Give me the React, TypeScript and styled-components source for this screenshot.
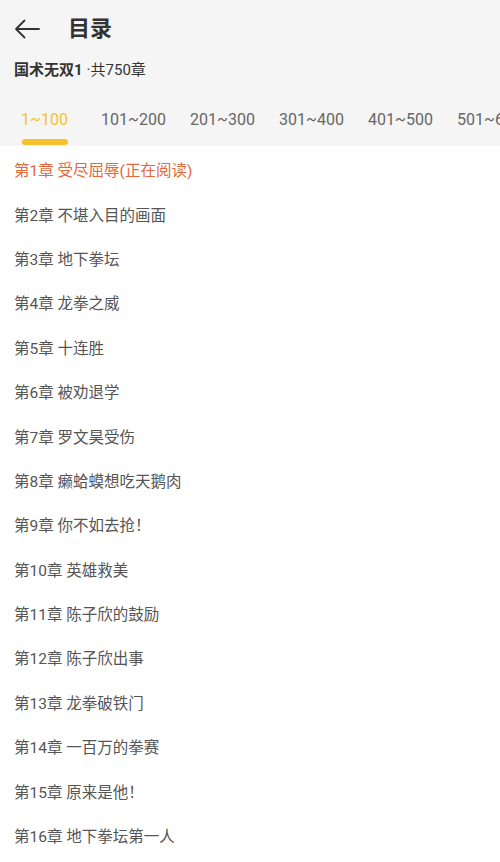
import React from "react";
import styled, { createGlobalStyle } from "styled-components";

const GlobalStyle = createGlobalStyle`
  body {
    margin: 0;
    background: #ffffff;
    font-family: Roboto, "Noto Sans CJK SC", sans-serif;
    -webkit-font-smoothing: antialiased;
  }
`;

const Page = styled.div`
  width: 500px;
  height: 862px;
  overflow: hidden;
  background: #ffffff;
`;

const Header = styled.div`
  background: #f5f5f5;
  display: flex;
  flex-direction: column;
`;

const TopBar = styled.div`
  height: 57px;
  display: flex;
  align-items: center;
  padding: 0 0 0 14px;
  box-sizing: border-box;
`;

const BackButton = styled.div`
  width: 26px;
  height: 24px;
  display: flex;
  align-items: center;
  justify-content: center;
  margin-right: 28px;
`;

const Title = styled.h1`
  margin: 0;
  font-size: 22px;
  font-weight: 700;
  color: #333333;
  line-height: 1;
`;

const BookInfo = styled.div`
  padding: 0 14px;
  height: 22px;
  display: flex;
  align-items: center;
  font-size: 15px;
  color: #333333;
`;

const BookName = styled.span`
  font-weight: 700;
  margin-right: 4px;
`;

const Tabs = styled.div`
  display: flex;
  margin-top: 18px;
  white-space: nowrap;
`;

const Tab = styled.div<{ $active?: boolean }>`
  flex: 0 0 89px;
  height: 49px;
  display: flex;
  flex-direction: column;
  align-items: center;
  justify-content: space-between;
  font-size: 16px;
  color: ${(p) => (p.$active ? "#f5c22d" : "#666666")};
`;

const TabLabel = styled.span`
  line-height: 22px;
  padding-top: 12px;
`;

const Indicator = styled.div<{ $active?: boolean }>`
  width: 46px;
  height: 6px;
  border-radius: 3px;
  margin-bottom: 1px;
  background: ${(p) => (p.$active ? "#f6c22b" : "transparent")};
`;

const ChapterList = styled.ul`
  list-style: none;
  margin: 0;
  padding: 1px 0 0;
`;

const Chapter = styled.li<{ $current?: boolean }>`
  height: 44.4px;
  display: flex;
  align-items: center;
  padding: 0 14px;
  font-size: 15.5px;
  color: ${(p) => (p.$current ? "#e6673a" : "#555555")};
  white-space: nowrap;
`;

const tabs = ["1~100", "101~200", "201~300", "301~400", "401~500", "501~600"];

const chapters = [
  "受尽屈辱(正在阅读)",
  "不堪入目的画面",
  "地下拳坛",
  "龙拳之威",
  "十连胜",
  "被劝退学",
  "罗文昊受伤",
  "癞蛤蟆想吃天鹅肉",
  "你不如去抢！",
  "英雄救美",
  "陈子欣的鼓励",
  "陈子欣出事",
  "龙拳破铁门",
  "一百万的拳赛",
  "原来是他！",
  "地下拳坛第一人",
];

export default function App() {
  return (
    <Page>
      <GlobalStyle />
      <Header>
        <TopBar>
          <BackButton>
            <svg width="26" height="20" viewBox="0 0 26 20" fill="none">
              <path
                d="M25 10H2M10.5 1.5L2 10l8.5 8.5"
                stroke="#333333"
                strokeWidth="1.8"
                strokeLinecap="round"
                strokeLinejoin="round"
              />
            </svg>
          </BackButton>
          <Title>目录</Title>
        </TopBar>
        <BookInfo>
          <BookName>国术无双1</BookName>
          <span>·共750章</span>
        </BookInfo>
        <Tabs>
          {tabs.map((t, i) => (
            <Tab key={t} $active={i === 0}>
              <TabLabel>{t}</TabLabel>
              <Indicator $active={i === 0} />
            </Tab>
          ))}
        </Tabs>
      </Header>
      <ChapterList>
        {chapters.map((name, i) => (
          <Chapter key={i} $current={i === 0}>
            第{i + 1}章 {name}
          </Chapter>
        ))}
      </ChapterList>
    </Page>
  );
}
